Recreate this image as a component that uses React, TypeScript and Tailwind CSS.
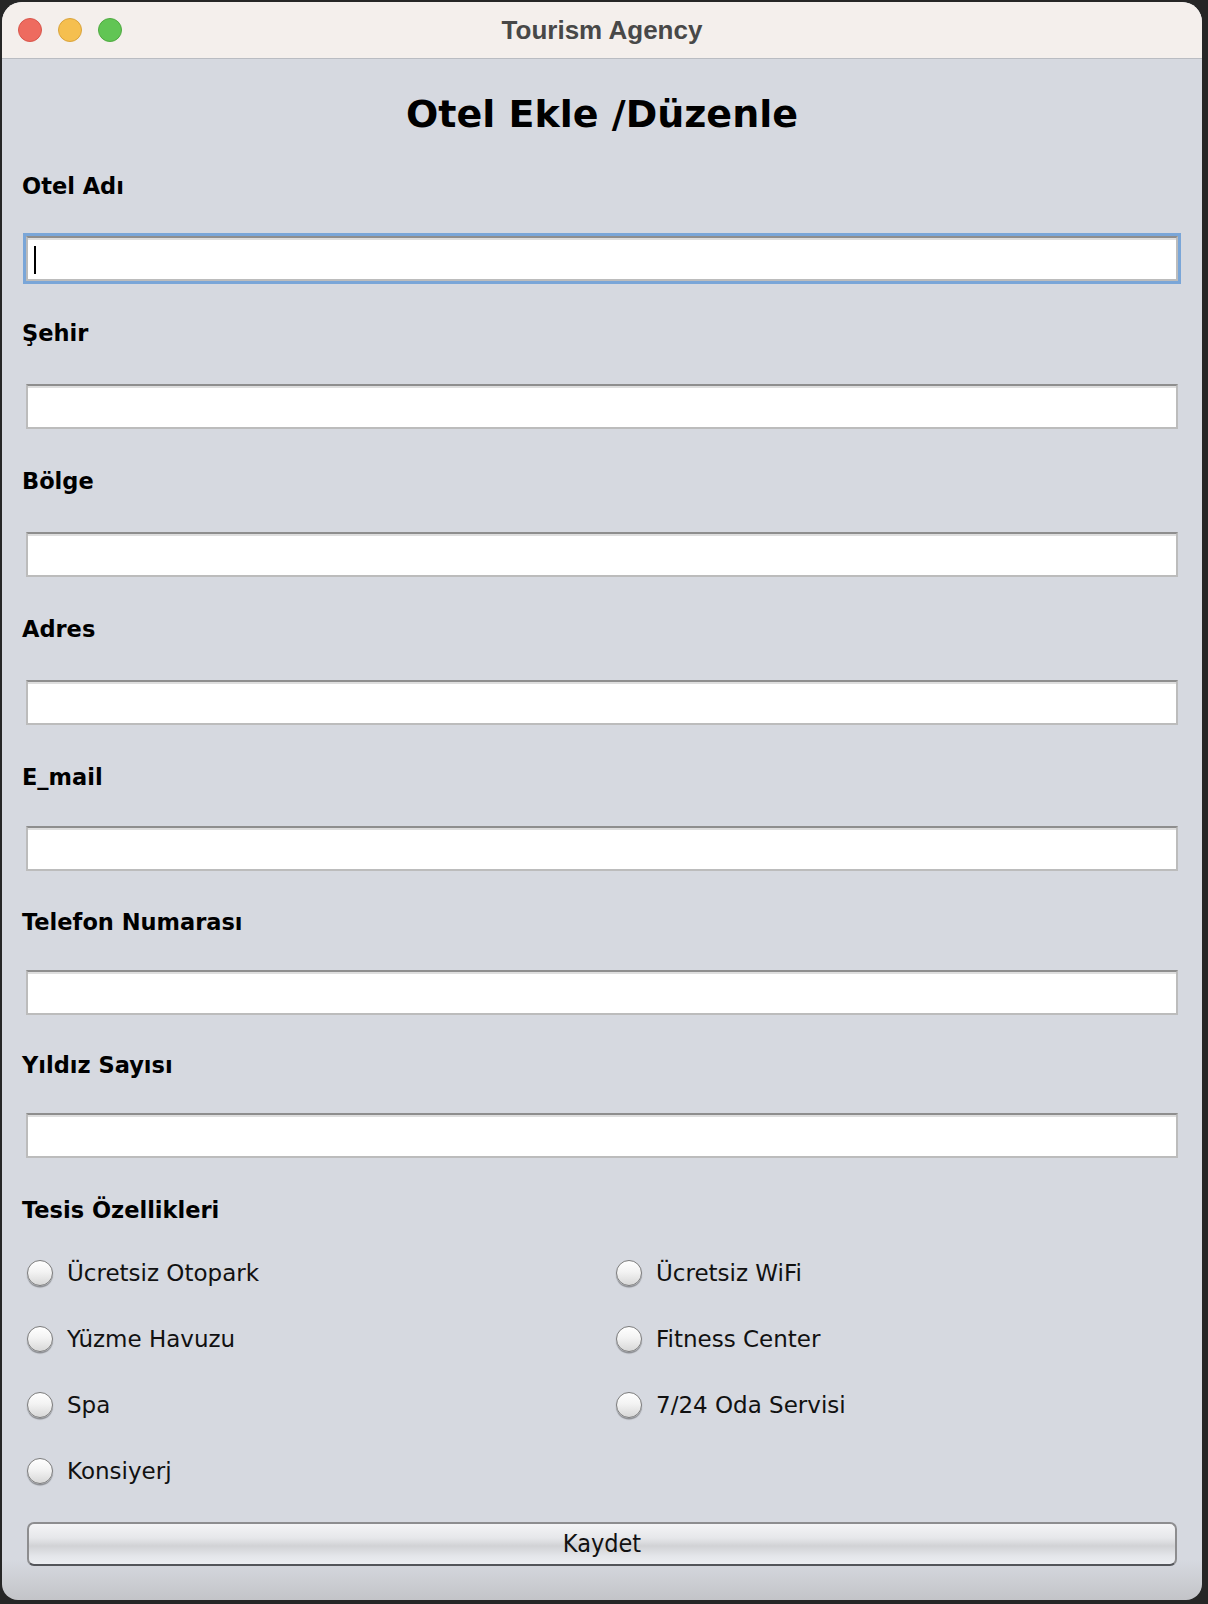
import React from "react";

const fields = [
  { label: "Otel Adı", labelGap: "mt-[33px]", inputGap: "mt-[35px]", focused: true },
  { label: "Şehir", labelGap: "mt-[37px]", inputGap: "mt-[36px]" },
  { label: "Bölge", labelGap: "mt-[37px]", inputGap: "mt-[36px]" },
  { label: "Adres", labelGap: "mt-[37px]", inputGap: "mt-[36px]" },
  { label: "E_mail", labelGap: "mt-[37px]", inputGap: "mt-[34px]" },
  { label: "Telefon Numarası", labelGap: "mt-[36px]", inputGap: "mt-[33px]" },
  { label: "Yıldız Sayısı", labelGap: "mt-[35px]", inputGap: "mt-[33px]" },
];

const features = [
  "Ücretsiz Otopark",
  "Ücretsiz WiFi",
  "Yüzme Havuzu",
  "Fitness Center",
  "Spa",
  "7/24 Oda Servisi",
  "Konsiyerj",
];

function Label({ text, className }: { text: string; className?: string }) {
  return (
    <div className={`-ml-[4px] h-[30px] text-[22.5px] leading-[30px] font-bold text-black font-['DejaVu_Sans',sans-serif] ${className ?? ""}`}>
      {text}
    </div>
  );
}

function TextField({ focused, className }: { focused?: boolean; className?: string }) {
  return (
    <div
      className={`relative h-[45px] bg-white border-2 border-[#bcbcbc] border-t-[#8e8e8e] shadow-[inset_0_2px_0_#dedede] ${
        focused ? "ring-[3px] ring-[#7aa6d8]" : ""
      } ${className ?? ""}`}
    >
      {focused && <div className="absolute left-[6px] top-[8px] h-[28px] w-[2px] bg-black" />}
    </div>
  );
}

function Radio({ text }: { text: string }) {
  return (
    <div className="flex h-[66px] items-center gap-[14px]">
      <div className="h-[26px] w-[26px] rounded-full border-[1.5px] border-[#7c7c7c] bg-[linear-gradient(to_bottom,#ffffff,#f3f3f3_45%,#d8d8d8)] shadow-[0_1.5px_1px_rgba(0,0,0,0.35)]" />
      <span className="text-[23px] text-[#111] font-['DejaVu_Sans',sans-serif]">{text}</span>
    </div>
  );
}

export default function App() {
  return (
    <div className="h-[1604px] w-[1208px] bg-[#262626] pl-[2px] pt-[2px]">
      <div className="flex h-[1598px] w-[1200px] flex-col overflow-hidden rounded-t-[20px] rounded-b-[16px] bg-[linear-gradient(to_bottom,#d6d9e0_calc(100%-40px),#c3c4c8)]">
        {/* title bar */}
        <div className="grid h-[57px] shrink-0 grid-cols-[1fr_auto_1fr] items-center border-b border-[#b9bcc2] bg-[#f4efec] px-[16px]">
          <div className="flex gap-[16px]">
            <span className="h-[24px] w-[24px] rounded-full border border-[#d8564c] bg-[#ee6b5f]" />
            <span className="h-[24px] w-[24px] rounded-full border border-[#d9a33c] bg-[#f5bf4f]" />
            <span className="h-[24px] w-[24px] rounded-full border border-[#4fa940] bg-[#61c554]" />
          </div>
          <div className="text-[26px] font-bold text-[#484848] font-['Liberation_Sans',sans-serif]">Tourism Agency</div>
          <div />
        </div>

        <div className="flex flex-col px-[24px]">
          <h1 className="mt-[31px] text-center text-[38px] leading-[48px] font-bold text-black font-['DejaVu_Sans',sans-serif]">
            Otel Ekle /Düzenle
          </h1>

          {fields.map((f) => (
            <React.Fragment key={f.label}>
              <Label text={f.label} className={f.labelGap} />
              <TextField focused={f.focused} className={f.inputGap} />
            </React.Fragment>
          ))}

          <Label text="Tesis Özellikleri" className="mt-[37px]" />

          <div className="mt-[15px] ml-[1px] grid grid-cols-[589px_1fr]">
            {features.map((t) => (
              <Radio key={t} text={t} />
            ))}
          </div>

          <button className="mx-[1px] mt-[18px] h-[44px] rounded-[7px] border-2 border-[#8d8d8f] border-b-[#53555a] bg-[linear-gradient(to_bottom,#f4f4f6,#e6e7ea_35%,#d1d2d5_55%,#e4e6ea_80%,#eceef2)] text-[25px] text-[#111] font-['DejaVu_Sans_Condensed','DejaVu_Sans',sans-serif]">
            Kaydet
          </button>
        </div>
      </div>
    </div>
  );
}
